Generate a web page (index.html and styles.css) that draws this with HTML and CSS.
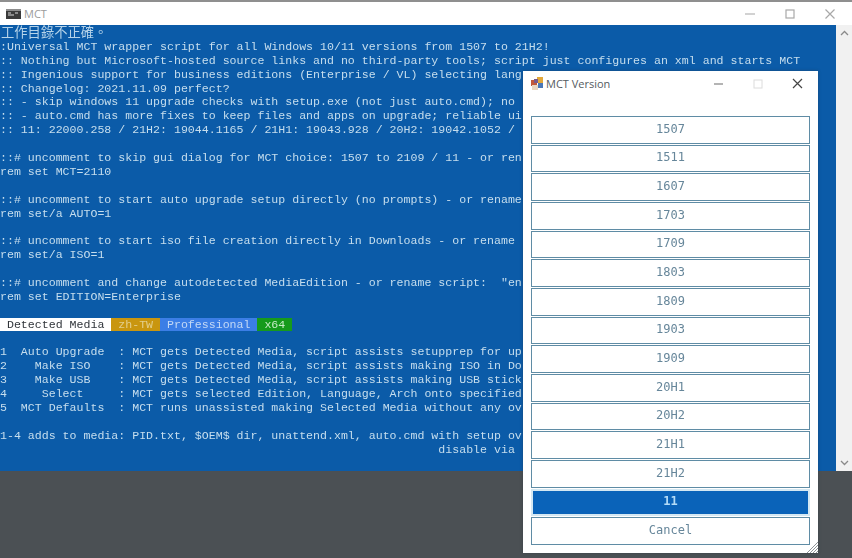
FILE: index.html
```html
<!DOCTYPE html>
<html lang="zh-Hant">
<head>
<meta charset="utf-8">
<title>MCT</title>
<link rel="stylesheet" href="styles.css">
</head>
<body>
<div class="window">
  <header class="titlebar">
    <svg class="app-icon" width="15" height="10" viewBox="0 0 15 10"><rect width="15" height="10" fill="#3a3a3a"/><rect y="0" width="15" height="2" fill="#8d8d8d"/><path d="M2 4h3M2 6h6M9 4h3" stroke="#d8d8d8" stroke-width="1"/></svg>
    <span class="title">MCT</span>
    <div class="controls">
      <svg width="12" height="12" viewBox="0 0 12 12"><path d="M1 6h10" stroke="#b5b5b5" stroke-width="1.2"/></svg>
      <svg width="12" height="12" viewBox="0 0 12 12"><rect x="2" y="2" width="8" height="8" fill="none" stroke="#a8a8a8" stroke-width="1.2"/></svg>
      <svg width="12" height="12" viewBox="0 0 12 12"><path d="M1.5 1.5l9 9M10.5 1.5l-9 9" stroke="#a8a8a8" stroke-width="1.2"/></svg>
    </div>
  </header>
  <div class="main">
    <div class="console">
      <div class="line cjk">工作目錄不正確。</div>
      <div class="line">:Universal MCT wrapper script for all Windows 10/11 versions from 1507 to 21H2!</div>
      <div class="line">:: Nothing but Microsoft-hosted source links and no third-party tools; script just configures an xml and starts MCT</div>
      <div class="line">:: Ingenious support for business editions (Enterprise / VL) selecting lang</div>
      <div class="line">:: Changelog: 2021.11.09 perfect?</div>
      <div class="line">:: - skip windows 11 upgrade checks with setup.exe (not just auto.cmd); no</div>
      <div class="line">:: - auto.cmd has more fixes to keep files and apps on upgrade; reliable ui</div>
      <div class="line">:: 11: 22000.258 / 21H2: 19044.1165 / 21H1: 19043.928 / 20H2: 19042.1052 /</div>
      <div class="line"></div>
      <div class="line">::# uncomment to skip gui dialog for MCT choice: 1507 to 2109 / 11 - or ren</div>
      <div class="line">rem set MCT=2110</div>
      <div class="line"></div>
      <div class="line">::# uncomment to start auto upgrade setup directly (no prompts) - or rename</div>
      <div class="line">rem set/a AUTO=1</div>
      <div class="line"></div>
      <div class="line">::# uncomment to start iso file creation directly in Downloads - or rename</div>
      <div class="line">rem set/a ISO=1</div>
      <div class="line"></div>
      <div class="line">::# uncomment and change autodetected MediaEdition - or rename script:  "en</div>
      <div class="line">rem set EDITION=Enterprise</div>
      <div class="line"></div>
      <div class="line"><span class="tag tag-white"> Detected Media </span><span class="tag tag-gold"> zh-TW </span><span class="tag tag-blue"> Professional </span><span class="tag tag-green"> x64 </span></div>
      <div class="line"></div>
      <div class="line">1  Auto Upgrade  : MCT gets Detected Media, script assists setupprep for up</div>
      <div class="line">2    Make ISO    : MCT gets Detected Media, script assists making ISO in Do</div>
      <div class="line">3    Make USB    : MCT gets Detected Media, script assists making USB stick</div>
      <div class="line">4     Select     : MCT gets selected Edition, Language, Arch onto specified</div>
      <div class="line">5  MCT Defaults  : MCT runs unassisted making Selected Media without any ov</div>
      <div class="line"></div>
      <div class="line">1-4 adds to media: PID.txt, $OEM$ dir, unattend.xml, auto.cmd with setup ov</div>
      <div class="line">                                                               disable via</div>
    </div>
    <div class="scrollbar">
      <svg width="9" height="6" viewBox="0 0 9 6"><path d="M1 5l3.5-3.5L8 5" fill="none" stroke="#8a8a8a" stroke-width="1.3"/></svg>
      <svg width="9" height="6" viewBox="0 0 9 6"><path d="M1 1l3.5 3.5L8 1" fill="none" stroke="#8a8a8a" stroke-width="1.3"/></svg>
    </div>
  </div>
</div>

<section class="dialog">
  <header class="dialog-bar">
    <svg class="dialog-icon" width="13" height="13" viewBox="0 0 13 13"><rect x="0" y="3" width="6" height="6" fill="#c2583a"/><rect x="6" y="0" width="6" height="6" fill="#e3a83a"/><rect x="1" y="8" width="6" height="5" fill="#e9d7c2"/><rect x="7" y="6" width="5" height="5" fill="#4a78b8"/><rect x="3" y="2" width="4" height="4" fill="#7a5a8a"/></svg>
    <span class="dialog-title">MCT Version</span>
    <div class="dialog-controls">
      <svg width="10" height="10" viewBox="0 0 10 10"><path d="M0 5h9" stroke="#8c8c8c" stroke-width="1.3"/></svg>
      <svg width="10" height="10" viewBox="0 0 10 10"><rect x="1" y="1" width="8" height="8" fill="none" stroke="#dcdcdc" stroke-width="1"/></svg>
      <svg width="11" height="11" viewBox="0 0 11 11"><path d="M1 1l9 9M10 1l-9 9" stroke="#444" stroke-width="1.2"/></svg>
    </div>
  </header>
  <div class="versions">
    <button class="ver">1507</button>
    <button class="ver">1511</button>
    <button class="ver">1607</button>
    <button class="ver">1703</button>
    <button class="ver">1709</button>
    <button class="ver">1803</button>
    <button class="ver">1809</button>
    <button class="ver">1903</button>
    <button class="ver">1909</button>
    <button class="ver">20H1</button>
    <button class="ver">20H2</button>
    <button class="ver">21H1</button>
    <button class="ver">21H2</button>
    <button class="ver ver-active">11</button>
    <button class="ver">Cancel</button>
  </div>
  <svg class="grip" width="12" height="12" viewBox="0 0 12 12"><path d="M12 1L1 12M12 4L4 12M12 7L7 12M12 10L10 12" stroke="#8f9498" stroke-width="1"/></svg>
</section>
</body>
</html>
```
FILE: styles.css
```css
* { box-sizing: border-box; }
html, body { margin: 0; height: 558px; overflow: hidden; }
body { background: #4b5054; position: relative; }
.window { display: flex; flex-direction: column; width: 852px; }
.titlebar {
  height: 25px;
  display: flex;
  align-items: center;
  background: #fff;
  border-top: 2px solid #8f8f8f;
  padding-left: 6px;
}
.app-icon { flex: none; }
.title {
  margin-left: 3px;
  font: 11px "Open Sans", "Liberation Sans", sans-serif;
  color: #9b9b9b;
}
.controls {
  margin-left: auto;
  display: flex;
  gap: 28px;
  padding-right: 16px;
}
.main { display: flex; height: 446px; }
.console {
  flex: 1;
  min-width: 0;
  overflow: hidden;
  background: #0b5ba8;
  color: #c6deee;
  font-family: "Liberation Mono", "Noto Sans CJK TC", monospace;
  font-size: 11.6px;
  padding-top: 1px;
  filter: blur(0.35px);
}
.line {
  height: 13.9px;
  line-height: 13.9px;
  white-space: pre;
}
.cjk {
  font-family: "Noto Sans CJK TC", sans-serif;
  font-size: 13.3px;
  margin-top: -1px;
  margin-bottom: 1px;
  padding-left: 1px;
  color: #b5d3e9;
}
.tag-white { background: #fff; color: #30353a; }
.tag-gold { background: #c9960f; color: #e3cf8e; }
.tag-blue { background: #3b7ee6; color: #c2d8f5; }
.tag-green { background: #169a1c; color: #c6ebc6; }
.scrollbar {
  flex: none;
  width: 16px;
  background: #f1f1f1;
  display: flex;
  flex-direction: column;
  justify-content: space-between;
  align-items: center;
  padding: 5px 0;
}
.dialog {
  position: absolute;
  left: 523px;
  top: 71px;
  width: 295px;
  height: 482px;
  background: #fff;
  padding: 0 8px;
  box-shadow: 0 0 3px rgba(40, 50, 60, .45);
}
.dialog-bar {
  height: 25px;
  display: flex;
  align-items: center;
}
.dialog-icon { flex: none; }
.dialog-title {
  margin-left: 2px;
  font: 11px "Open Sans", "Liberation Sans", sans-serif;
  color: #555b60;
}
.dialog-controls {
  margin-left: auto;
  display: flex;
  align-items: center;
  gap: 29px;
  padding-right: 7px;
}
.versions {
  margin-top: 20px;
  display: flex;
  flex-direction: column;
  gap: 1px;
}
.ver {
  height: 27.67px;
  margin: 0;
  padding: 0 0 2px;
  background: #fff;
  border: 1.5px solid #5f8ca5;
  color: #66869a;
  font: 12px "DejaVu Sans Mono", monospace;
  filter: blur(0.25px);
}
.ver-active {
  background: #0a63b9;
  border: 2px solid #d4e8f3;
  color: #b4dcf7;
  font-weight: bold;
}
.grip { position: absolute; right: 0; bottom: 0; }
```
